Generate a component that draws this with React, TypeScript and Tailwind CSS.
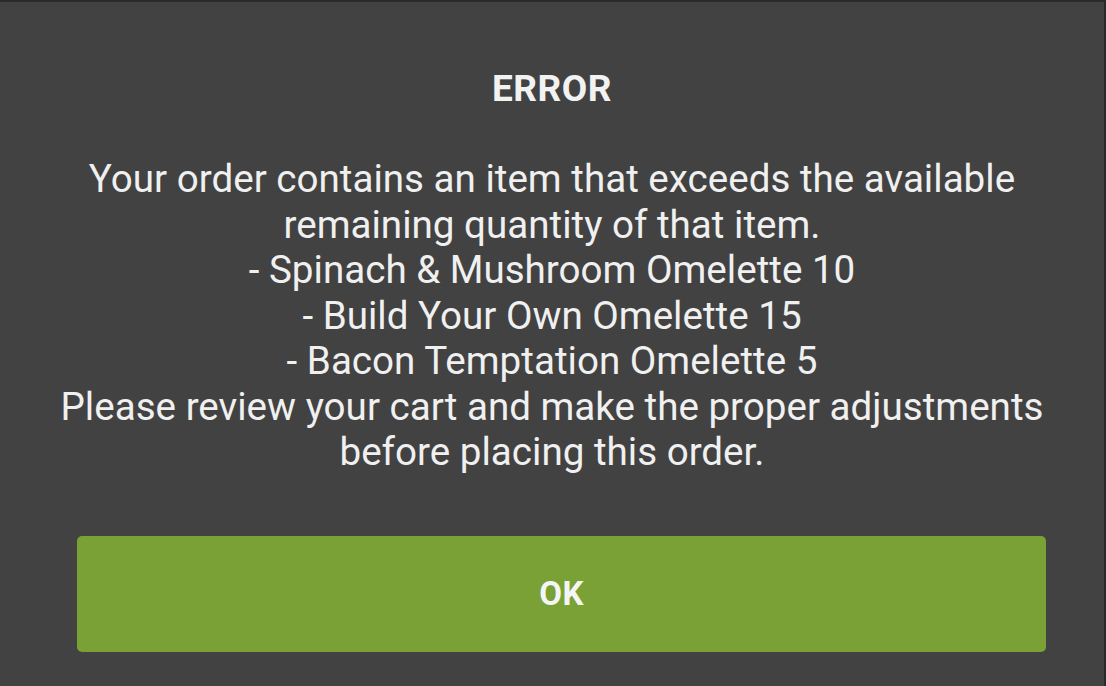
export default function App() {
  return (
    <div className="flex h-[686px] w-[1106px] flex-col overflow-hidden border-t-2 border-r-2 border-[#2a2a2a] bg-[#424242] font-['Roboto',sans-serif] text-white">
      <h1 className="mt-[68px] text-center text-[37px] font-bold leading-[38px] tracking-[0.5px] text-[#f2f2f2]">ERROR</h1>
      <p className="mt-[48px] text-center text-[38.6px] leading-[45.5px] text-[#f0f0f0]">
        Your order contains an item that exceeds the available
        <br />remaining quantity of that item.
        <br />- Spinach &amp; Mushroom Omelette 10
        <br />- Build Your Own Omelette 15
        <br />- Bacon Temptation Omelette 5
        <br />Please review your cart and make the proper adjustments
        <br />before placing this order.
      </p>
      <div className="mt-auto mb-[34px] pl-[77px] pr-[58px]">
        <button className="flex h-[116px] w-full items-center justify-center rounded-[5px] bg-[#7aa136] text-[33px] font-bold tracking-[0.5px] text-[#f5f5f5]">
          OK
        </button>
      </div>
    </div>
  )
}
